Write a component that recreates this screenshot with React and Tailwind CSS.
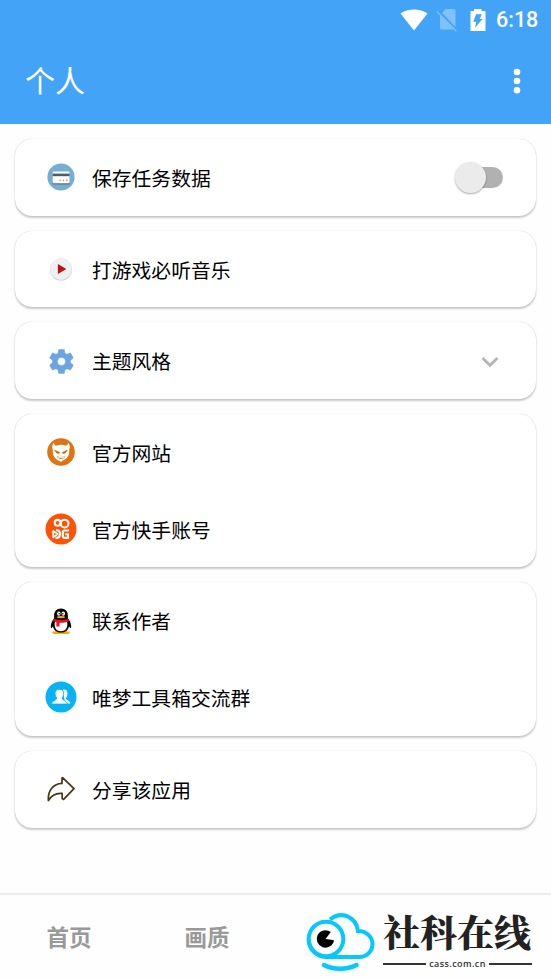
import React from 'react';

const CardIcon = () => (
  <svg viewBox="0 0 28 28" className="w-7 h-7">
    <circle cx="14" cy="14" r="13.6" fill="#74afd3" />
    <rect x="5.6" y="9" width="17" height="12.4" rx="1.2" fill="#5f6b80" />
    <rect x="5.6" y="8.4" width="17" height="11.8" rx="1.2" fill="#fff" />
    <rect x="5.6" y="10.6" width="17" height="2.6" fill="#4b5a78" />
    <path d="M12.4 17.4h1.4M15.8 17.4h1.4M19.2 17.4h1.4" stroke="#e09a6b" strokeWidth="1.6" />
  </svg>
);

const PlayIcon = () => (
  <svg viewBox="0 0 28 28" className="w-7 h-7">
    <circle cx="14" cy="14.6" r="11" fill="#cfd2d6" />
    <circle cx="14" cy="14" r="10.7" fill="#eef0f3" />
    <path d="M10.9 8.9v10.2l8.4-5.1z" fill="#bd1111" />
  </svg>
);

const GearIcon = () => (
  <svg viewBox="0 0 24 24" className="w-[29px] h-[29px] mt-px">
    <path
      fill="#6aa5df"
      stroke="#6aa5df"
      strokeWidth="0.4"
      d="M19.43 12.98c.04-.32.07-.64.07-.98s-.03-.66-.07-.98l2.11-1.65c.19-.15.24-.42.12-.64l-2-3.46c-.12-.22-.39-.3-.61-.22l-2.49 1c-.52-.4-1.08-.73-1.69-.98l-.38-2.65A.49.49 0 0 0 14 2h-4c-.25 0-.46.18-.49.42l-.38 2.65c-.61.25-1.17.59-1.69.98l-2.49-1c-.23-.09-.49 0-.61.22l-2 3.46c-.13.22-.07.49.12.64l2.11 1.65c-.04.32-.07.65-.07.98s.03.66.07.98l-2.11 1.65c-.19.15-.24.42-.12.64l2 3.46c.12.22.39.3.61.22l2.49-1c.52.4 1.08.73 1.69.98l.38 2.65c.03.24.24.42.49.42h4c.25 0 .46-.18.49-.42l.38-2.65c.61-.25 1.17-.59 1.69-.98l2.49 1c.23.09.49 0 .61-.22l2-3.46c.12-.22.07-.49-.12-.64zM12 15.3a3.3 3.3 0 1 1 0-6.6 3.3 3.3 0 0 1 0 6.6z"
    />
  </svg>
);

const DevilIcon = () => (
  <svg viewBox="0 0 28 28" className="w-7 h-7">
    <circle cx="14" cy="14" r="13.8" fill="#df7412" />
    <path d="M7.2 4.5c-.3 1.9.3 2.7 1.8 3.3 3-1.3 7-1.3 10 0 1.5-.6 2.100-1.400 1.800-3.300 2.300 2.200 2.600 4.600 1.400 7.100.6 5.800-2.200 10.300-8.200 12.100-6-1.800-8.800-6.300-8.200-12.100-1.200-2.500-.9-4.900 1.400-7.100z" fill="#fff" />
    <path d="M7.8 12.2l4.900 2.300c-.2 1.700-3.900 1.200-4.900-2.300zM20.200 12.200l-4.900 2.300c.2 1.700 3.900 1.200 4.900-2.300z" fill="#b85c08" stroke="#df7412" strokeWidth="0.6" />
    <path d="M9.8 18.3c2.800.8 5.600.8 8.400 0-.9 2-2.400 2.700-4.200 2.700s-3.300-.7-4.200-2.700z" fill="#df7412" />
    <path d="M11 19.5l6 .1" stroke="#fff" strokeWidth="0.8" />
    <path d="M15.5 22.8l5-2.300" stroke="#df7412" strokeWidth="0.8" />
  </svg>
);

const KuaishouIcon = () => (
  <svg viewBox="0 0 32 32" className="w-8 h-8">
    <circle cx="16" cy="16" r="15.5" fill="#ff5204" />
    <g fill="none" stroke="#fff" strokeWidth="2.1" strokeLinejoin="round">
      <circle cx="12.6" cy="9.8" r="2.9" />
      <circle cx="19.6" cy="10.600" r="3.900" />
      <path d="M8.2 18l4.500 3-4.500 3.400z" strokeWidth="1.800" />
      <path d="M11 17.300h1c4 0 4 7.600 0 7.600h-1.500" />
      <path d="M24 17.500h-4.200c-1.400 0-2 .6-2 1.800v3.800c0 1.200.6 1.800 2 1.800H23v-3.700h-2.800" />
    </g>
  </svg>
);

const PenguinIcon = () => (
  <svg viewBox="0 0 24 28" className="w-6 h-7">
    <ellipse cx="8" cy="25.4" rx="4.8" ry="1.5" fill="#f7a800" />
    <ellipse cx="16" cy="25.4" rx="4.8" ry="1.5" fill="#f7a800" />
    <path d="M12 1.5c-4.4 0-6.9 3-6.9 6.8v3C3.4 13.4 1.9 16.1 1.8 19.5c0 2.2 1 2 2.200-.3.7 4 3.700 6.300 8 6.300s7.300-2.300 8-6.300c1.200 2.300 2.200 2.500 2.200.3-.1-3.400-1.600-6.100-3.300-8.200v-3c0-3.800-2.500-6.800-6.900-6.800z" fill="#050505" />
    <path d="M6 14.5h12c1.200 5.600-.9 9.800-6 9.800s-7.200-4.200-6-9.800z" fill="#fff" />
    <ellipse cx="9.8" cy="6.6" rx="1.7" ry="2.2" fill="#fff" />
    <ellipse cx="14.3" cy="6.6" rx="1.7" ry="2.2" fill="#fff" />
    <circle cx="10.2" cy="6.8" r="0.75" />
    <circle cx="13.9" cy="6.8" r="0.75" />
    <ellipse cx="12" cy="10.1" rx="4.1" ry="1.2" fill="#f7a800" />
    <path d="M4.8 11.7c4.300 1.800 10.100 1.800 14.400 0l.7 2.500c-3.200 1.500-6.600 1.800-9.400 1.600v3.800H7.400v-4.300l-3.300-1.100z" fill="#e8111c" />
  </svg>
);

const GroupIcon = () => (
  <svg viewBox="0 0 32 32" className="w-8 h-8">
    <circle cx="16" cy="16" r="15.5" fill="#08b2f3" />
    <path d="M18 8.5c3.4-.5 4.800 1.600 4.400 4.900-.2 1.800-1 2.800-1.600 3.800.3 2.300 4.400 2.200 4.600 5.200H20z" fill="#fff" />
    <path
      d="M14.4 8.3c3.3 0 4.700 2.100 4.300 5.200-.2 1.600-.9 2.600-1.600 3.500.1 2.800 5.100 2.300 5.400 6.100H6.300c.3-3.800 5.300-3.300 5.400-6.100-.7-.9-1.400-1.900-1.600-3.500-.4-3.100 1-5.200 4.300-5.200z"
      fill="#fff"
      stroke="#08b2f3"
      strokeWidth="0.9"
    />
  </svg>
);

const ShareIcon = () => (
  <svg viewBox="0 0 28 28" className="w-7 h-7">
    <path
      d="M15.6 2.600L27 13.700 16.600 24.400 15.200 23.600v-5.200c-6-.6-10.200.9-13.800 7.200C.6 15.500 6.500 8.600 15 8.400V3z"
      fill="none"
      stroke="#483512"
      strokeWidth="1.7"
      strokeLinejoin="round"
    />
  </svg>
);

const Toggle = () => (
  <div className="relative w-[49px] h-8 flex items-center justify-end">
    <span className="w-9 h-[21px] rounded-full bg-[#b1b1b1]" />
    <span className="absolute left-px top-[1px] w-[31px] h-[31px] rounded-full bg-[#ebebeb] shadow-[0_1px_2px_rgba(0,0,0,0.35)]" />
  </div>
);

const Chevron = () => (
  <svg viewBox="0 0 18 12" className="w-[18px] h-3 mr-[4px] mt-[2px]">
    <path d="M1.5 2l7.5 7.300L16.500 2" fill="none" stroke="#b3b3b3" strokeWidth="2.7" />
  </svg>
);

const groups = [
  [{ label: '保存任务数据', icon: CardIcon, extra: Toggle }],
  [{ label: '打游戏必听音乐', icon: PlayIcon }],
  [{ label: '主题风格', icon: GearIcon, extra: Chevron }],
  [
    { label: '官方网站', icon: DevilIcon },
    { label: '官方快手账号', icon: KuaishouIcon },
  ],
  [
    { label: '联系作者', icon: PenguinIcon },
    { label: '唯梦工具箱交流群', icon: GroupIcon },
  ],
  [{ label: '分享该应用', icon: ShareIcon }],
];

function StatusBar() {
  return (
    <div className="h-10 flex items-center justify-end pr-3">
      <svg viewBox="0 0 28 22" className="w-7 h-[22px]">
        <path d="M0.5 4.5C8-1 20-1 27.500 4.500L14 21.500z" fill="#fff" />
      </svg>
      <svg viewBox="0 0 22 24" className="w-[22px] h-6 ml-[8px]">
        <g fill="#fff" opacity="0.32">
          <path d="M9.5 1H18q1.500 0 1.500 1.500V19L6.200 5z" />
          <path d="M4 7.200V20q0 1.500 1.500 1.500H17.700z" />
          <path d="M1.200 3L20.800 22.400l-1.100 1L.2 4z" />
        </g>
      </svg>
      <svg viewBox="0 0 16 22" className="w-4 h-[22px] ml-[12px] -mt-px">
        <path d="M4 0h7.500v2h4v20H.5V2H4z" fill="#fff" />
        <path d="M6 5.300h5.800l-2 4.700h2.700L5 18.700l1.200-6H3.300z" fill="#43a4f7" />
      </svg>
      <span className="ml-[10px] w-[43px] font-['Roboto',sans-serif] text-[21.5px] leading-10 font-medium text-white whitespace-nowrap">6:18</span>
    </div>
  );
}

function Header() {
  return (
    <header className="h-[124px] shrink-0 bg-[#43a4f7]">
      <StatusBar />
      <div className="h-[82px] flex items-center justify-between pl-[25px] pr-[30px]">
        <h1 className="pb-[4px] text-[30px] leading-10 text-white font-normal">个人</h1>
        <svg viewBox="0 0 8 26" className="w-2 h-[26px]" fill="#fff">
          <circle cx="4" cy="4" r="3.3" />
          <circle cx="4" cy="13" r="3.3" />
          <circle cx="4" cy="22.2" r="3.3" />
        </svg>
      </div>
    </header>
  );
}

function Row({ item }) {
  const Icon = item.icon;
  const Extra = item.extra;
  return (
    <div className="h-[76.7px] flex items-center pl-[30px] pr-[33px]">
      <div className="w-8 flex justify-center shrink-0">
        <Icon />
      </div>
      <span className="ml-[15px] pt-px flex-1 text-[19.8px] leading-7 text-black">{item.label}</span>
      {Extra && <Extra />}
    </div>
  );
}

function SiteLogo() {
  return (
    <div className="flex items-center">
      <svg viewBox="0 0 70 60" className="w-[70px] h-[60px]" fill="none" stroke="#05c8ff" strokeWidth="4">
        <path d="M24 8.5C35-.5 50 5.500 52 20c8.500 0 14.500 6 14.500 13S61 46 53 46H20C9 45.500 2.700 37 2.700 28" />
        <circle cx="20" cy="28" r="17.3" />
        <path d="M18 54c9 5 23 5 32.500 0" strokeWidth="4.5" strokeLinecap="round" />
        <path d="M19.500 28l5.300-6.900A8.700 8.700 0 1 0 28 29.200l-4.500-.7z" fill="#000" stroke="none" />
      </svg>
      <div className="ml-[7px] w-[149px] flex flex-col">
        <span className="h-[42px] font-['Noto_Serif_CJK_SC','Noto_Sans_CJK_SC',serif] font-black text-[37px] leading-[38px] text-[#222] whitespace-nowrap">社科在线</span>
        <div className="flex items-center gap-[3px] h-3 mt-[4px]">
          <span className="flex-1 h-[2px] bg-[#333]" />
          <span className="font-['Open_Sans',sans-serif] text-[9px] leading-[10px] font-semibold tracking-[0.4px] text-[#333]">cass.com.cn</span>
          <span className="flex-1 h-[2px] bg-[#333]" />
        </div>
      </div>
    </div>
  );
}

function BottomNav() {
  return (
    <nav className="h-[86px] shrink-0 border-t-2 border-[#ececf0] flex items-center text-[22.5px] font-bold text-[#999]">
      <span className="w-[138px] text-center">首页</span>
      <span className="w-[138px] text-center">画质</span>
      <div className="ml-[30px] mt-[8px]">
        <SiteLogo />
      </div>
    </nav>
  );
}

export default function App() {
  return (
    <div className="w-full h-screen flex flex-col bg-[#fefefe] overflow-hidden font-['Noto_Sans_CJK_SC',sans-serif]">
      <Header />
      <main className="flex-1 min-h-0 px-[15px] pt-[15px] flex flex-col gap-[15px]">
        {groups.map((items) => (
          <section
            key={items[0].label}
            className="rounded-[17px] bg-white shadow-[0_2px_2px_rgba(0,0,0,0.2),0_0_1px_rgba(0,0,0,0.25)]"
          >
            {items.map((item) => (
              <Row key={item.label} item={item} />
            ))}
          </section>
        ))}
      </main>
      <BottomNav />
    </div>
  );
}
